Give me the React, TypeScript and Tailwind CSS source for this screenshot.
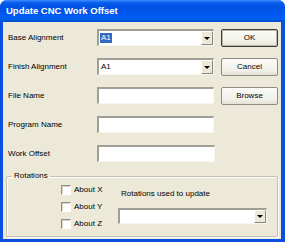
const sunken =
  "border-t-2 border-l-2 border-b border-r border-t-[#a19f95] border-l-[#a19f95] border-b-[#f7f6f1] border-r-[#f7f6f1] bg-white";

const Arrow = () => (
  <div className="flex w-[12px] items-center justify-center border border-t-white border-l-white border-b-[#8a877c] border-r-[#8a877c] bg-[#ece9d8]">
    <div className="h-0 w-0 border-x-[3px] border-t-[3px] border-x-transparent border-t-black" />
  </div>
);

const Combo = ({
  value,
  selected,
  className = "",
}: {
  value?: string;
  selected?: boolean;
  className?: string;
}) => (
  <div className={`flex ${sunken} ${className}`}>
    <div className="flex flex-1 items-center pl-[1px]">
      {value && (
        <span
          className={
            selected ? "bg-[#316ac5] px-[1px] text-white" : "px-[1px]"
          }
        >
          {value}
        </span>
      )}
    </div>
    <Arrow />
  </div>
);

const Btn = ({ label, primary }: { label: string; primary?: boolean }) => (
  <div
    className={`ml-[7px] flex h-[18px] w-[57px] items-center justify-center rounded-[2px] border bg-[linear-gradient(180deg,#fbfbf8_0%,#f2f1ea_70%,#e3e1d6_100%)] ${
      primary ? "border-[#3d3d3a] shadow-[inset_0_0_0_1px_#b9b7ac]" : "border-[#8e8c84]"
    }`}
  >
    {label}
  </div>
);

const Row = ({
  label,
  children,
}: {
  label: string;
  children: React.ReactNode;
}) => (
  <div className="flex h-[17px] items-center">
    <div className="w-[94px] pl-[5px]">{label}</div>
    {children}
  </div>
);

const Check = ({ label }: { label: string }) => (
  <div className="flex h-[10px] items-center">
    <div className="h-[10px] w-[10px] border border-t-[#8f8d84] border-l-[#8f8d84] border-b-white border-r-white bg-white shadow-[inset_1px_1px_0_#d6d4ca]" />
    <span className="ml-[3px]">{label}</span>
  </div>
);

export default function App() {
  return (
    <div className="h-[242px] w-[285px] bg-white font-['Liberation_Sans',Arial,sans-serif] text-black">
      <div className="flex h-full flex-col rounded-t-[7px] bg-[#0a4fe0]">
        <div className="flex h-[22px] items-center rounded-t-[7px] bg-[linear-gradient(180deg,#3d8fff_0%,#0a5ef0_12%,#0054e3_28%,#0055eb_60%,#005bf5_72%,#0062ef_86%,#0049c8_100%)] pl-[6px] text-[9.5px] font-bold text-white">
          Update CNC Work Offset
        </div>
        <div className="mb-[3px] ml-[3px] mr-[4px] flex-1 bg-[#ece9d8] pt-[7px] text-[8px] leading-[10px]">
          <div className="flex flex-col gap-[12px]">
            <Row label="Base Alignment">
              <Combo value="A1" selected className="h-[17px] w-[117px]" />
              <Btn label="OK" primary />
            </Row>
            <Row label="Finish Alignment">
              <Combo value="A1" className="h-[17px] w-[117px]" />
              <Btn label="Cancel" />
            </Row>
            <Row label="File Name">
              <div className={`h-[17px] w-[117px] ${sunken}`} />
              <Btn label="Browse" />
            </Row>
            <Row label="Program Name">
              <div className={`h-[17px] w-[117px] ${sunken}`} />
            </Row>
            <Row label="Work Offset">
              <div className={`h-[17px] w-[118px] ${sunken}`} />
            </Row>
          </div>
          <fieldset className="ml-[3px] mt-[9px] h-[66px] w-[272px] rounded-[2px] border border-[#c3c0b2] shadow-[inset_1px_1px_0_#fff,1px_1px_0_#fff]">
            <legend className="ml-[5px] px-[2px] leading-[10px]">Rotations</legend>
            <div className="flex pt-[4px]">
              <div className="flex w-[111px] flex-col gap-[7px] pl-[54px]">
                <Check label="About X" />
                <Check label="About Y" />
                <Check label="About Z" />
              </div>
              <div className="flex flex-col pt-[4px]">
                <div className="pl-[3px]">Rotations used to update</div>
                <Combo className="mt-[9px] h-[16px] w-[149px]" />
              </div>
            </div>
          </fieldset>
        </div>
      </div>
    </div>
  );
}
